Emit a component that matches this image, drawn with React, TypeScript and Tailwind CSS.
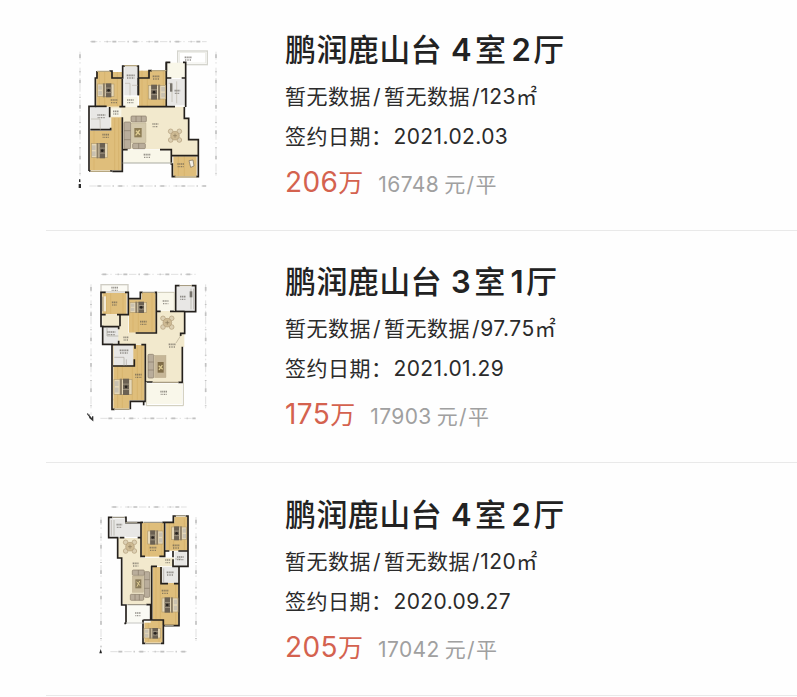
import type { ReactNode } from "react";

const WALL = "#24201c";
const WOOD = "#dfbe7b";
const GRAIN = "#d0ab62";
const FLOOR = "#f2e9cd";
const TILE = "#e8e7e5";

type Box = [number, number, number, number];

const Rects = ({ items, fill }: { items: Box[]; fill: string }) => (
  <g fill={fill}>
    {items.map(([x, y, w, h], i) => (
      <rect key={i} x={x} y={y} width={w} height={h} />
    ))}
  </g>
);

const Bed = ({ x, y, w, h, flip = false }: { x: number; y: number; w: number; h: number; flip?: boolean }) => (
  <g transform={flip ? `translate(${x + w} ${y}) scale(-1 1)` : `translate(${x} ${y})`}>
    <rect width={w} height={h} fill="#e6d8b8" stroke="#b39d70" strokeWidth="2" />
    <rect x="2" y={h * 0.12} width={w * 0.22} height={h * 0.33} fill="#c9c1b0" />
    <rect x="2" y={h * 0.55} width={w * 0.22} height={h * 0.33} fill="#c9c1b0" />
    <rect x={w * 0.32} y="-2" width={w * 0.12} height={h + 4} fill="#8b7d65" />
    <rect x={w * 0.5} y="-2" width={w * 0.34} height={h + 4} fill="#6b6153" />
    <path d={`M${w * 0.5} ${h * 0.32}H${w * 0.84}M${w * 0.5} ${h * 0.68}H${w * 0.84}`} stroke="#9b917f" strokeWidth="3" />
    <circle cx={w * 0.67} cy={h * 0.5} r="4" fill="#26221e" />
  </g>
);

const Table = ({ x, y }: { x: number; y: number }) => (
  <g transform={`translate(${x} ${y})`} stroke="#b09b78" strokeWidth="2">
    <g fill="#dccfb2">
      <circle cx="-13" cy="-13" r="7" />
      <circle cx="13" cy="-13" r="7" />
      <circle cx="-13" cy="13" r="7" />
      <circle cx="13" cy="13" r="7" />
    </g>
    <circle r="13" fill="#cdb992" />
    <path d="M-6 0H6M0-6V6" stroke="#8b7a5c" />
  </g>
);

// Small caption under each room name
const Mark = ({ x, y, w = 20 }: { x: number; y: number; w?: number }) => (
  <g stroke="#55504a" opacity="0.6">
    <path d={`M${x - w / 2} ${y}h${w}`} strokeWidth="5" strokeDasharray="4 1.5" />
    <path d={`M${x - w / 2 + 1} ${y + 8}h${w - 2}`} strokeWidth="4" strokeDasharray="3 2" />
  </g>
);

const Dimensions = ({ box: [l, t, r, b] }: { box: Box }) => (
  <g fill="none" stroke="#c2c2c2">
    <path d={`M${l + 30} ${t}H${r - 28}M${l + 28} ${b}H${r - 28}`} strokeWidth="1.5" strokeDasharray="22 6 4 10" />
    <path d={`M${l + 34} ${t}H${r - 30}M${l + 52} ${b}H${r - 30}`} strokeWidth="5" strokeDasharray="12 34 3 14" />
    <path d={`M${l} ${t + 30}V${b - 10}M${r} ${t + 30}V${b - 30}`} strokeWidth="1.5" strokeDasharray="24 7 5 12" />
    <path d={`M${l} ${t + 38}V${b - 14}M${r} ${t + 38}V${b - 34}`} strokeWidth="5" strokeDasharray="11 40 3 22" />
  </g>
);

const PlanA = () => (
  <g>
    <Dimensions box={[30, 35, 438, 468]} />
    <path d="M26 462h7v12h-7zM27 448h4v8h-4z" fill="#2b2b2b" />
    <rect x="323" y="63" width="89" height="41" fill="#fff" stroke="#d4d4cd" strokeWidth="4" />
    <rect x="328" y="68" width="79" height="31" fill="none" stroke="#e6e6df" strokeWidth="2" />
    <path d="M121 230H345V265H355V329H384V377H306V358H160V300H121Z" fill={FLOOR} />
    <Rects fill={WOOD} items={[[79, 126, 77, 104], [207, 122, 83, 107], [60, 302, 95, 119], [124, 262, 31, 46], [310, 379, 70, 60]]} />
    <path d="M88 126V228M104 126V228M142 126V228M216 122V228M232 122V228M280 122V228M72 302V420M134 264V420M146 264V420M325 379V438M343 379V438" stroke={GRAIN} strokeWidth="1.5" />
    <Rects fill={TILE} items={[[61, 233, 59, 66], [163, 108, 40, 88], [294, 147, 52, 79]]} />
    <Rects fill="#f9f7e9" items={[[292, 98, 54, 46], [163, 200, 40, 30], [162, 360, 142, 39], [122, 235, 32, 25]]} />
    <g fill="none" stroke={WALL} strokeWidth="5">
      <path d="M81 123V144H76V229H57V423M57 423H62M120 423H127M118 123H126V144H158V108H165M200 108H205V196M205 129V144H237V122H246M286 122H289V97H301M339 97H347V231" />
      <path d="M76 229H110M148 230H166M202 230H315M119 231V262M61 299H122V293M157 146V231M157 262V424H127M158 359H173M205 144V196M291 144H304M335 144H347M343 231V265H356V329H385V440H378M270 359H304V402H307V440H317M306 377H383M289 97V229" />
      <path d="M158 399H306" stroke="#a9aaa0" strokeWidth="3" />
    </g>
    <path d="M81 124H119M163 107H202M244 122H289M62 424H121M314 441H380" stroke="#b6a67f" strokeWidth="4" />
    <path d="M63 267H90L91 299M165 160H180V196M186 166H203M296 160H306V216M320 154V220" fill="none" stroke="#bdb7ab" strokeWidth="2" />
    <rect x="300" y="160" width="7" height="25" fill="#77736c" />
    <Bed x={83} y={162} w={49} h={38} />
    <Bed x={235} y={166} w={52} h={41} flip />
    <Bed x={64} y={341} w={49} h={42} />
    <g fill="#b9ad9b" stroke="#887a68" strokeWidth="2">
      <rect x="162" y="276" width="20" height="80" rx="3" />
      <rect x="183" y="258" width="46" height="18" rx="3" />
      <rect x="188" y="340" width="38" height="16" rx="3" />
      <path d="M162 302H182M162 329H182M198 258V276M214 258V276M206 340V356" />
    </g>
    <rect x="185" y="280" width="43" height="58" fill="#d3c8ab" stroke="#b0a284" />
    <rect x="193" y="294" width="22" height="28" fill="#8d7d55" />
    <path d="M198 302L210 314M209 300L197 316" stroke="#dfcd93" strokeWidth="4" />
    <Table x={315} y={317} />
    <path d="M357 392L369 390L372 408L362 412Z" fill="#f3eee3" stroke="#766b58" strokeWidth="2" />
    <Mark x={132} y={210} />
    <Mark x={94} y={255} w={24} />
    <Mark x={138} y={244} w={18} />
    <Mark x={182} y={136} w={24} />
    <Mark x={181} y={210} />
    <Mark x={258} y={139} />
    <Mark x={322} y={182} w={17} />
    <Mark x={355} y={82} w={22} />
    <Mark x={256} y={282} w={18} />
    <Mark x={107} y={314} />
    <Mark x={231} y={374} w={20} />
    <Mark x={332} y={402} />
  </g>
);

const PlanB = () => (
  <g transform="translate(15 0)">
    <Dimensions box={[48, 37, 392, 469]} />
    <path d="M37 455L53 474M43 466L53 474L53 463" fill="none" stroke="#333" strokeWidth="4" />
    <path d="M36 455L45 460" stroke="#777" strokeWidth="3" />
    <rect x="78" y="68" width="81" height="22" fill="#fbfaf4" stroke="#cfcdc4" strokeWidth="4" />
    <path d="M82 159H160V213H243V147H328V255H322V361H212V248H112V192H82Z" fill={FLOOR} />
    <Rects fill={WOOD} items={[[82, 93, 73, 64], [162, 112, 80, 100], [200, 90, 42, 24], [115, 249, 94, 166], [115, 410, 48, 30]]} />
    <path d="M94 94V156M107 94V156M144 94V156M174 120V210M190 120V210M231 92V210M128 315V438M142 315V438M172 315V413M187 250V413M200 250V413" stroke={GRAIN} strokeWidth="1.5" />
    <Rects fill={TILE} items={[[84, 195, 46, 50], [116, 249, 59, 62], [304, 75, 57, 70]]} />
    <Rects fill="#f9f7ea" items={[[247, 92, 51, 54], [216, 365, 105, 61]]} />
    <g fill="none" stroke={WALL} strokeWidth="5">
      <path d="M86 91H78V193H83V247H111V442H119M78 91H92M150 91H160V110H196V91H203M239 91H244V213H182M79 158H92M126 158H160V111M135 158V193M82 194H131V202M131 236V248M111 248H180V260M178 292V312H114M199 248H211V418H166V442M211 360H233M302 146V71H314M350 71H362V149H329V214H317V222M322 254V361H310M244 148H257M285 148H329" />
      <path d="M206 418V430" />
      <path d="M214 360V431H325V361M247 91H299M298 90V147" stroke="#cdc9b6" strokeWidth="3" />
    </g>
    <path d="M202 91H240M314 71H351M118 442H164M84 104V148M233 361H310" stroke="#a89d83" strokeWidth="4" />
    <rect x="86" y="103" width="7" height="45" fill="#f3ead5" />
    <path d="M96 197V222H130M118 286H147V311M154 292V310M348 80V142M356 80V142" fill="none" stroke="#aaa69e" strokeWidth="2" />
    <rect x="344" y="88" width="8" height="18" fill="#77736c" />
    <Bed x={165} y={121} w={50} h={30} />
    <Bed x={117} y={352} w={54} h={45} />
    <g fill="#b9ad9b" stroke="#887a68" strokeWidth="2">
      <rect x="219" y="277" width="17" height="71" rx="3" />
      <path d="M219 300H236M219 324H236" />
    </g>
    <rect x="239" y="280" width="34" height="67" fill="#c6b697" stroke="#b0a284" />
    <rect x="248" y="300" width="18" height="32" fill="#806d48" />
    <path d="M251 311L263 322M262 309L252 324" stroke="#dfcd93" strokeWidth="4" />
    <Table x={277} y={182} />
    <path d="M303 243L317 221" stroke="#b3a98e" strokeWidth="2" />
    <Mark x={119} y={77} />
    <Mark x={119} y={121} w={17} />
    <Mark x={109} y={210} w={24} />
    <Mark x={153} y={226} w={16} />
    <Mark x={147} y={265} w={26} />
    <Mark x={205} y={179} />
    <Mark x={324} y={104} w={18} />
    <Mark x={272} y={117} w={18} />
    <Mark x={292} y={247} w={22} />
    <Mark x={190} y={338} />
    <Mark x={266} y={389} />
  </g>
);

const PlanC = () => (
  <g transform="translate(45 0)">
    <Dimensions box={[48, 36, 333, 470]} />
    <path d="M43 475L47 462L51 475Z" fill="#222" />
    <path d="M98 129H168V188H267V214H200V328H113V190H98Z" fill={FLOOR} />
    <Rects fill={WOOD} items={[[170, 84, 67, 101], [243, 83, 65, 84], [268, 65, 40, 20], [203, 216, 77, 174], [178, 377, 55, 66]]} />
    <path d="M180 85V184M192 85V184M229 85V184M253 84V165M266 84V165M298 70V165M213 218V374M226 270V374M272 270V388M190 378V440M222 378V440" stroke={GRAIN} strokeWidth="1.5" />
    <Rects fill={TILE} items={[[74, 71, 49, 53], [123, 84, 42, 42], [269, 170, 36, 42], [231, 216, 49, 48]]} />
    <Rects fill="#fafaf4" items={[[121, 331, 76, 52]]} />
    <g fill="none" stroke={WALL} strokeWidth="5">
      <path d="M82 67H71V128H98V189H110V330H123V386M119 67H123V83H168V184H180M104 128H118M158 128H168M166 82H174M232 82H265V63H273M302 63H309V214H264V193M239 82V184H223M240 168H253M280 168H309M264 168V187M200 213V375M235 392H282V216M228 216V266H249M267 266H282M198 214H216M197 329V374M184 329H200M175 375H235V445H228M174 374V445H181M118 385H123" />
      <path d="M123 384H176" stroke="#c4c4bf" strokeWidth="3" />
    </g>
    <path d="M82 67H119M175 82H231M272 62H302M181 446H228M127 329H183M239 392H266M121 83H157" stroke="#9d9787" strokeWidth="4" />
    <path d="M79 75V122M87 75V122M270 192H288M236 220V262" stroke="#aaa69e" strokeWidth="2" />
    <Bed x={188} y={108} w={46} h={39} flip />
    <Bed x={260} y={96} w={45} h={38} flip />
    <Bed x={231} y={309} w={48} h={42} flip />
    <Bed x={177} y={401} w={50} h={28} />
    <g fill="#b9ad9b" stroke="#887a68" strokeWidth="2">
      <rect x="178" y="230" width="16" height="77" rx="3" />
      <rect x="142" y="225" width="36" height="16" rx="3" />
      <rect x="136" y="298" width="40" height="18" rx="3" />
      <path d="M178 254H194M178 280H194M150 298V316M163 298V316M160 225V241" />
    </g>
    <rect x="142" y="243" width="33" height="49" fill="#cbbd9f" stroke="#b0a284" />
    <rect x="151" y="253" width="18" height="27" fill="#8b7c5a" />
    <path d="M155 260L165 272M164 258L156 275" stroke="#dfcd93" strokeWidth="3" />
    <Table x={135} y={155} />
    <Mark x={103} y={89} w={17} />
    <Mark x={204} y={158} />
    <Mark x={273} y={151} />
    <Mark x={286} y={186} />
    <Mark x={248} y={195} w={15} />
    <Mark x={152} y={205} w={18} />
    <Mark x={256} y={232} w={22} />
    <Mark x={240} y={287} />
    <Mark x={159} y={354} w={18} />
  </g>
);

type Deal = {
  rooms: string;
  halls: string;
  area: string;
  date: string;
  price: string;
  unit: string;
  height: string;
  plan: ReactNode;
};

const deals: Deal[] = [
  { rooms: "4", halls: "2", area: "123", date: "2021.02.03", price: "206", unit: "16748", height: "h-[231px]", plan: <PlanA /> },
  { rooms: "3", halls: "1", area: "97.75", date: "2021.01.29", price: "175", unit: "17903", height: "h-[232px]", plan: <PlanB /> },
  { rooms: "4", halls: "2", area: "120", date: "2020.09.27", price: "205", unit: "17042", height: "h-[233px]", plan: <PlanC /> },
];

const DealRow = ({ deal }: { deal: Deal }) => (
  <li className={`ml-[46px] flex items-end border-b border-[#e9e9e9] ${deal.height}`}>
    <svg className="mb-[30px] ml-6 h-[170px] w-[155px] shrink-0" viewBox="0 0 465 510">
      {deal.plan}
    </svg>
    <div className="mb-[25px] ml-[60px] whitespace-nowrap text-[#2b2b2b]">
      <h2 className="text-[31px] leading-10 font-medium tracking-[0.4px] text-[#222]">
        鹏润鹿山台
        <span className="ml-[9px] font-semibold">{deal.rooms}</span>
        <span className="ml-[3px]">室</span>
        <span className="ml-[5px] font-semibold">{deal.halls}</span>
        <span className="ml-[2px]">厅</span>
      </h2>
      <p className="mt-[7px] text-[21px] leading-10 tracking-[0.5px]">
        暂无数据<span className="mr-[3px] ml-[2px]">/</span>暂无数据<span className="ml-[2px]">/</span>
        {deal.area}㎡
      </p>
      <p className="text-[21px] leading-10 tracking-[0.5px]">
        签约日期：<span className="ml-px tracking-[0.4px]">{deal.date}</span>
      </p>
      <p className="mt-[5px] flex items-baseline leading-10">
        <span className="text-[28px] tracking-[0.4px] text-[#d4624f]">{deal.price}</span>
        <span className="text-[25px] text-[#d4624f]">万</span>
        <span className="ml-[15px] text-[21px] tracking-[0.4px] text-[#a0a0a0]">
          {deal.unit}
          <span className="ml-[5px]">元</span>
          <span className="mx-px">/</span>平
        </span>
      </p>
    </div>
  </li>
);

export default function App() {
  return (
    <main className="h-[697px] w-[797px] overflow-hidden bg-[#fefefe] font-[Inter,'Noto_Sans_CJK_SC',sans-serif]">
      <ul>
        {deals.map((deal) => (
          <DealRow key={deal.date} deal={deal} />
        ))}
      </ul>
    </main>
  );
}
